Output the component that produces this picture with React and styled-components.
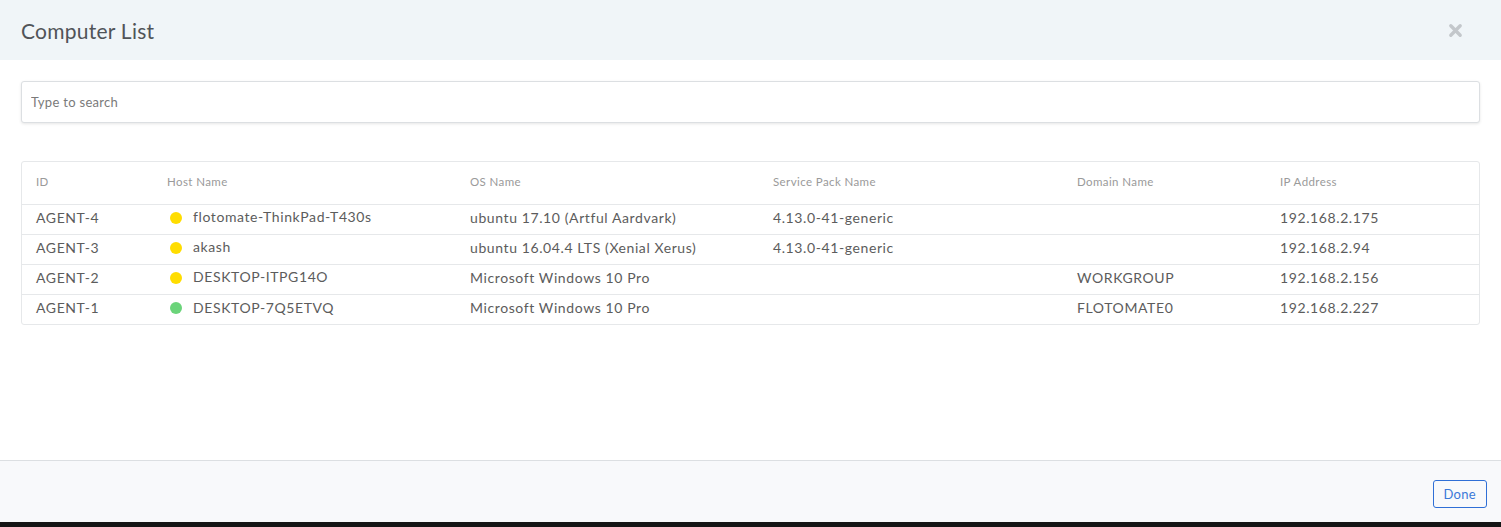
import React from 'react';
import styled, { createGlobalStyle } from 'styled-components';

const GlobalStyle = createGlobalStyle`
  html, body {
    margin: 0;
    padding: 0;
    background: #151515;
  }
  body {
    font-family: Lato, "Open Sans", sans-serif;
  }
`;

const Modal = styled.div`
  width: 1501px;
  height: 522px;
  background: #fff;
  display: flex;
  flex-direction: column;
`;

const Header = styled.div`
  height: 60px;
  background: #f0f5f8;
  display: flex;
  align-items: center;
  justify-content: space-between;
  padding: 0 38px 0 21px;
  box-sizing: border-box;
  flex-shrink: 0;
`;

const Title = styled.h4`
  margin: 0;
  font-size: 21px;
  font-weight: 400;
  letter-spacing: 0.25px;
  color: #505458;
`;

const CloseButton = styled.button`
  border: none;
  background: none;
  padding: 0;
  width: 16px;
  height: 16px;
  cursor: pointer;
  display: flex;
  align-items: center;
  justify-content: center;
`;

const Body = styled.div`
  flex: 1;
  padding: 21px 21px 0 21px;
  display: flex;
  flex-direction: column;
  gap: 38px;
`;

const SearchInput = styled.input`
  height: 42px;
  box-sizing: border-box;
  width: 100%;
  border: 1px solid #dcdfe2;
  border-radius: 3px;
  box-shadow: 0 1px 3px rgba(0, 0, 0, 0.1);
  padding: 0 9px;
  font-family: inherit;
  font-size: 13px;
  letter-spacing: 0.3px;
  color: #555;
  outline: none;
  &::placeholder {
    color: #7a7a7a;
  }
`;

const TableWrap = styled.div`
  border: 1px solid #e6e8ea;
  border-radius: 3px;
`;

const Table = styled.table`
  width: 100%;
  border-collapse: collapse;
  table-layout: fixed;
`;

const Th = styled.th`
  text-align: left;
  font-weight: 400;
  font-size: 11.5px;
  letter-spacing: 0.4px;
  color: #9a9a9a;
  height: 42px;
  box-sizing: border-box;
  padding: 0 0 2px ${p => p.$pl || 0}px;
  border-bottom: 1px solid #e6e8ea;
`;

const Tr = styled.tr`
  & + & td {
    border-top: 1px solid #e6e8ea;
  }
`;

const Td = styled.td`
  font-size: 14px;
  letter-spacing: 0.6px;
  color: #5c5c5c;
  height: 30px;
  box-sizing: border-box;
  padding: 0 0 3px ${p => p.$pl || 0}px;
  white-space: nowrap;
`;

const Host = styled.span`
  display: inline-flex;
  align-items: center;
  gap: 11px;
`;

const Dot = styled.span`
  width: 12px;
  height: 12px;
  border-radius: 50%;
  background: ${p => (p.$online ? '#6bd47a' : '#ffdd00')};
  margin: 2px 0 0 3px;
`;

const Footer = styled.div`
  height: 61px;
  background: #f8f9fb;
  border-top: 1px solid #dcdfe2;
  display: flex;
  align-items: center;
  justify-content: flex-end;
  padding: 0 14px;
  flex-shrink: 0;
`;

const DoneButton = styled.button`
  background: transparent;
  border: 1px solid #2f6fd6;
  border-radius: 3px;
  color: #3a78d8;
  font-family: inherit;
  font-size: 13px;
  letter-spacing: 0.3px;
  height: 28px;
  padding: 0 10px;
  cursor: pointer;
  margin-top: 4px;
`;

const rows = [
  { id: 'AGENT-4', host: 'flotomate-ThinkPad-T430s', os: 'ubuntu 17.10 (Artful Aardvark)', sp: '4.13.0-41-generic', domain: '', ip: '192.168.2.175', online: false },
  { id: 'AGENT-3', host: 'akash', os: 'ubuntu 16.04.4 LTS (Xenial Xerus)', sp: '4.13.0-41-generic', domain: '', ip: '192.168.2.94', online: false },
  { id: 'AGENT-2', host: 'DESKTOP-ITPG14O', os: 'Microsoft Windows 10 Pro', sp: '', domain: 'WORKGROUP', ip: '192.168.2.156', online: false },
  { id: 'AGENT-1', host: 'DESKTOP-7Q5ETVQ', os: 'Microsoft Windows 10 Pro', sp: '', domain: 'FLOTOMATE0', ip: '192.168.2.227', online: true },
];

const cols = [145, 303, 303, 304, 203, null];

const App = () => {
  return (
    <>
      <GlobalStyle />
      <Modal>
        <Header>
          <Title>Computer List</Title>
          <CloseButton aria-label="close">
            <svg width="15" height="15" viewBox="0 0 16 16">
              <path d="M3 3 L13 13 M13 3 L3 13" stroke="#c3c7cb" strokeWidth="3.6" strokeLinecap="round" />
            </svg>
          </CloseButton>
        </Header>
        <Body>
          <SearchInput placeholder="Type to search" />
          <TableWrap>
            <Table>
              <colgroup>
                {cols.map((w, i) => (
                  <col key={i} style={w ? { width: w } : undefined} />
                ))}
              </colgroup>
              <thead>
                <tr>
                  <Th $pl={14}>ID</Th>
                  <Th>Host Name</Th>
                  <Th>OS Name</Th>
                  <Th>Service Pack Name</Th>
                  <Th>Domain Name</Th>
                  <Th>IP Address</Th>
                </tr>
              </thead>
              <tbody>
                {rows.map(r => (
                  <Tr key={r.id}>
                    <Td $pl={14}>{r.id}</Td>
                    <Td>
                      <Host>
                        <Dot $online={r.online} />
                        {r.host}
                      </Host>
                    </Td>
                    <Td>{r.os}</Td>
                    <Td>{r.sp}</Td>
                    <Td>{r.domain}</Td>
                    <Td>{r.ip}</Td>
                  </Tr>
                ))}
              </tbody>
            </Table>
          </TableWrap>
        </Body>
        <Footer>
          <DoneButton>Done</DoneButton>
        </Footer>
      </Modal>
    </>
  );
};

export default App;
